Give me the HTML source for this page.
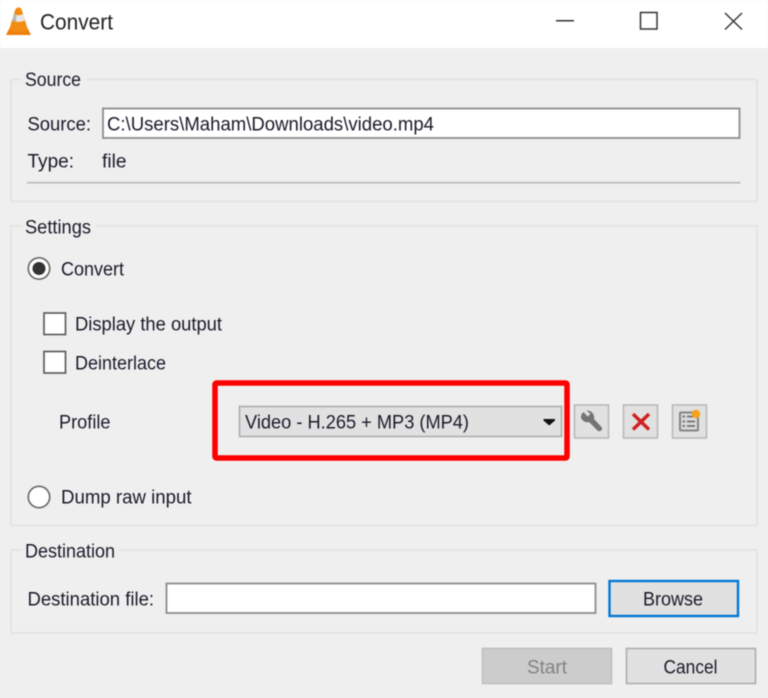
<!DOCTYPE html>
<html>
<head>
<meta charset="utf-8">
<title>Convert</title>
<style>
html,body{margin:0;padding:0;background:#efefef;width:768px;height:698px;overflow:hidden}
svg{display:block;filter:blur(.45px)}
text{font-family:"Liberation Sans",sans-serif;font-size:19px;fill:#1a1a2a;transform:translateY(.6px)}
</style>
</head>
<body>
<svg width="768" height="698" viewBox="0 0 768 698" xmlns="http://www.w3.org/2000/svg">
<rect width="768" height="698" fill="#efefef"/>
<rect width="768" height="48" fill="#fff"/>

<!-- cone -->
<path d="M6 35 L9.500 28 H27.500 L31 35 Z" fill="#ee7f0a"/>
<path d="M15.500 9 Q18.500 5.500 21.500 9 L28 30 Q18.500 34 9 30 Z" fill="#f28c12"/>
<path d="M14 14 Q18.500 16.500 23 14 L24.800 20.500 Q18.500 23.500 12.300 20.500 Z" fill="#e9e9e9"/>
<path d="M14 14 L12.300 20.500 L16 21.800 L16.500 15 Z" fill="#b8b8b8"/>
<text x="40" y="29.500" style="font-size:22px;fill:#222;transform:none" textLength="73" lengthAdjust="spacingAndGlyphs">Convert</text>

<!-- window controls -->
<rect x="556" y="20" width="18" height="1.500" fill="#333"/>
<rect x="640.500" y="12.500" width="16.500" height="16.500" fill="none" stroke="#333" stroke-width="1.500"/>
<path d="M725 13 L742 29.500 M742 13 L725 29.500" stroke="#333" stroke-width="1.400" fill="none"/>

<!-- Source group -->
<rect x="11" y="79.500" width="746" height="122" fill="none" stroke="#e2e2e2" stroke-width="1.600"/>
<rect x="21" y="74" width="65" height="12" fill="#efefef"/>
<text x="25" y="85.500" textLength="56" lengthAdjust="spacingAndGlyphs">Source</text>
<text x="27.500" y="130" textLength="63.500" lengthAdjust="spacingAndGlyphs">Source:</text>
<rect x="103" y="108.500" width="636.500" height="29.500" fill="#fff" stroke="#8c8c8c" stroke-width="1.800"/>
<text x="107" y="130" textLength="327" lengthAdjust="spacingAndGlyphs">C:\Users\Maham\Downloads\video.mp4</text>
<text x="27.500" y="167" textLength="46.500" lengthAdjust="spacingAndGlyphs">Type:</text>
<text x="102" y="167" textLength="24.500" lengthAdjust="spacingAndGlyphs">file</text>
<rect x="27" y="182" width="713.500" height="1.500" fill="#b4b4b4"/>

<!-- Settings group -->
<rect x="11" y="226" width="746" height="299.500" fill="none" stroke="#e2e2e2" stroke-width="1.600"/>
<rect x="21" y="220" width="75" height="12" fill="#efefef"/>
<text x="25" y="233" textLength="66" lengthAdjust="spacingAndGlyphs">Settings</text>

<circle cx="39" cy="268.500" r="10.700" fill="#fff" stroke="#666" stroke-width="1.600"/>
<circle cx="39" cy="268.500" r="6.500" fill="#333"/>
<text x="61" y="275" textLength="63" lengthAdjust="spacingAndGlyphs">Convert</text>

<rect x="44" y="313" width="21.500" height="21.500" fill="#fff" stroke="#555" stroke-width="1.600"/>
<text x="75" y="330" textLength="147" lengthAdjust="spacingAndGlyphs">Display the output</text>
<rect x="44" y="351.500" width="21.500" height="21.500" fill="#fff" stroke="#555" stroke-width="1.600"/>
<text x="75" y="369" textLength="91" lengthAdjust="spacingAndGlyphs">Deinterlace</text>

<text x="59" y="428" textLength="51.500" lengthAdjust="spacingAndGlyphs">Profile</text>

<!-- combo -->
<rect x="239.500" y="406.500" width="322" height="30" fill="#e1e1e1" stroke="#adadad" stroke-width="1.600"/>
<text x="245" y="428" textLength="224" lengthAdjust="spacingAndGlyphs">Video - H.265 + MP3 (MP4)</text>
<path d="M543.500 419 H555 V420.500 L549.200 425.500 L543.500 420.500 Z" fill="#111"/>

<!-- red highlight -->
<rect x="215" y="383" width="352" height="75" rx="1.500" fill="none" stroke="#fe0000" stroke-width="5.500"/>

<!-- tool buttons -->
<rect x="574.500" y="405" width="34" height="33" fill="#e1e1e1" stroke="#b9b9b9" stroke-width="1.600"/>
<path d="M581 418 A6.500 6.500 0 0 1 583.500 412 L587.500 416.500 L590.500 414 L586.500 410.500 A7 7 0 0 1 594 419 L601.500 427 Q603 429 601 430.500 Q599 432 597.500 430.500 L589 422 A7 7 0 0 1 581 418 Z" fill="#747474"/>

<rect x="623.500" y="405" width="34" height="33" fill="#e1e1e1" stroke="#b9b9b9" stroke-width="1.600"/>
<path d="M633 414 L649 429.500 M649 414 L633 429.500" stroke="#d21f1f" stroke-width="3.400" fill="none"/>

<rect x="672.500" y="405" width="34" height="33" fill="#e1e1e1" stroke="#b9b9b9" stroke-width="1.600"/>
<rect x="680" y="412.500" width="18" height="18" rx="1" fill="#dadada" stroke="#858585" stroke-width="2"/>
<path d="M682.500 416.500 h2.500 M687 416.500 h8 M682.500 421.500 h2.500 M687 421.500 h8 M682.500 426 h2.500 M687 426 h8" stroke="#6e6e6e" stroke-width="1.800" fill="none"/>
<circle cx="696" cy="414" r="4.200" fill="#f9a11b"/>

<circle cx="39" cy="497" r="10.700" fill="#fff" stroke="#666" stroke-width="1.600"/>
<text x="61" y="503" textLength="130.500" lengthAdjust="spacingAndGlyphs">Dump raw input</text>

<!-- Destination group -->
<rect x="11" y="550" width="746" height="83" fill="none" stroke="#e2e2e2" stroke-width="1.600"/>
<rect x="21" y="544" width="97" height="12" fill="#efefef"/>
<text x="25" y="557" textLength="90" lengthAdjust="spacingAndGlyphs">Destination</text>
<text x="27.500" y="605" textLength="126.500" lengthAdjust="spacingAndGlyphs">Destination file:</text>
<rect x="166.500" y="583.500" width="429" height="29.500" fill="#fff" stroke="#8c8c8c" stroke-width="1.800"/>

<rect x="609.500" y="581" width="128.500" height="35" fill="#e1e1e1" stroke="#0078d7" stroke-width="2.400"/>
<text x="643" y="605" textLength="60" lengthAdjust="spacingAndGlyphs">Browse</text>

<rect x="482.500" y="648.500" width="129" height="35" fill="#cccccc" stroke="#bfbfbf" stroke-width="1.600"/>
<text x="527" y="673" textLength="40" lengthAdjust="spacingAndGlyphs" style="fill:#838383">Start</text>
<rect x="626.500" y="648.500" width="129" height="35" fill="#e1e1e1" stroke="#adadad" stroke-width="1.600"/>
<text x="663.500" y="673" textLength="54" lengthAdjust="spacingAndGlyphs">Cancel</text>
</svg>
</body>
</html>
